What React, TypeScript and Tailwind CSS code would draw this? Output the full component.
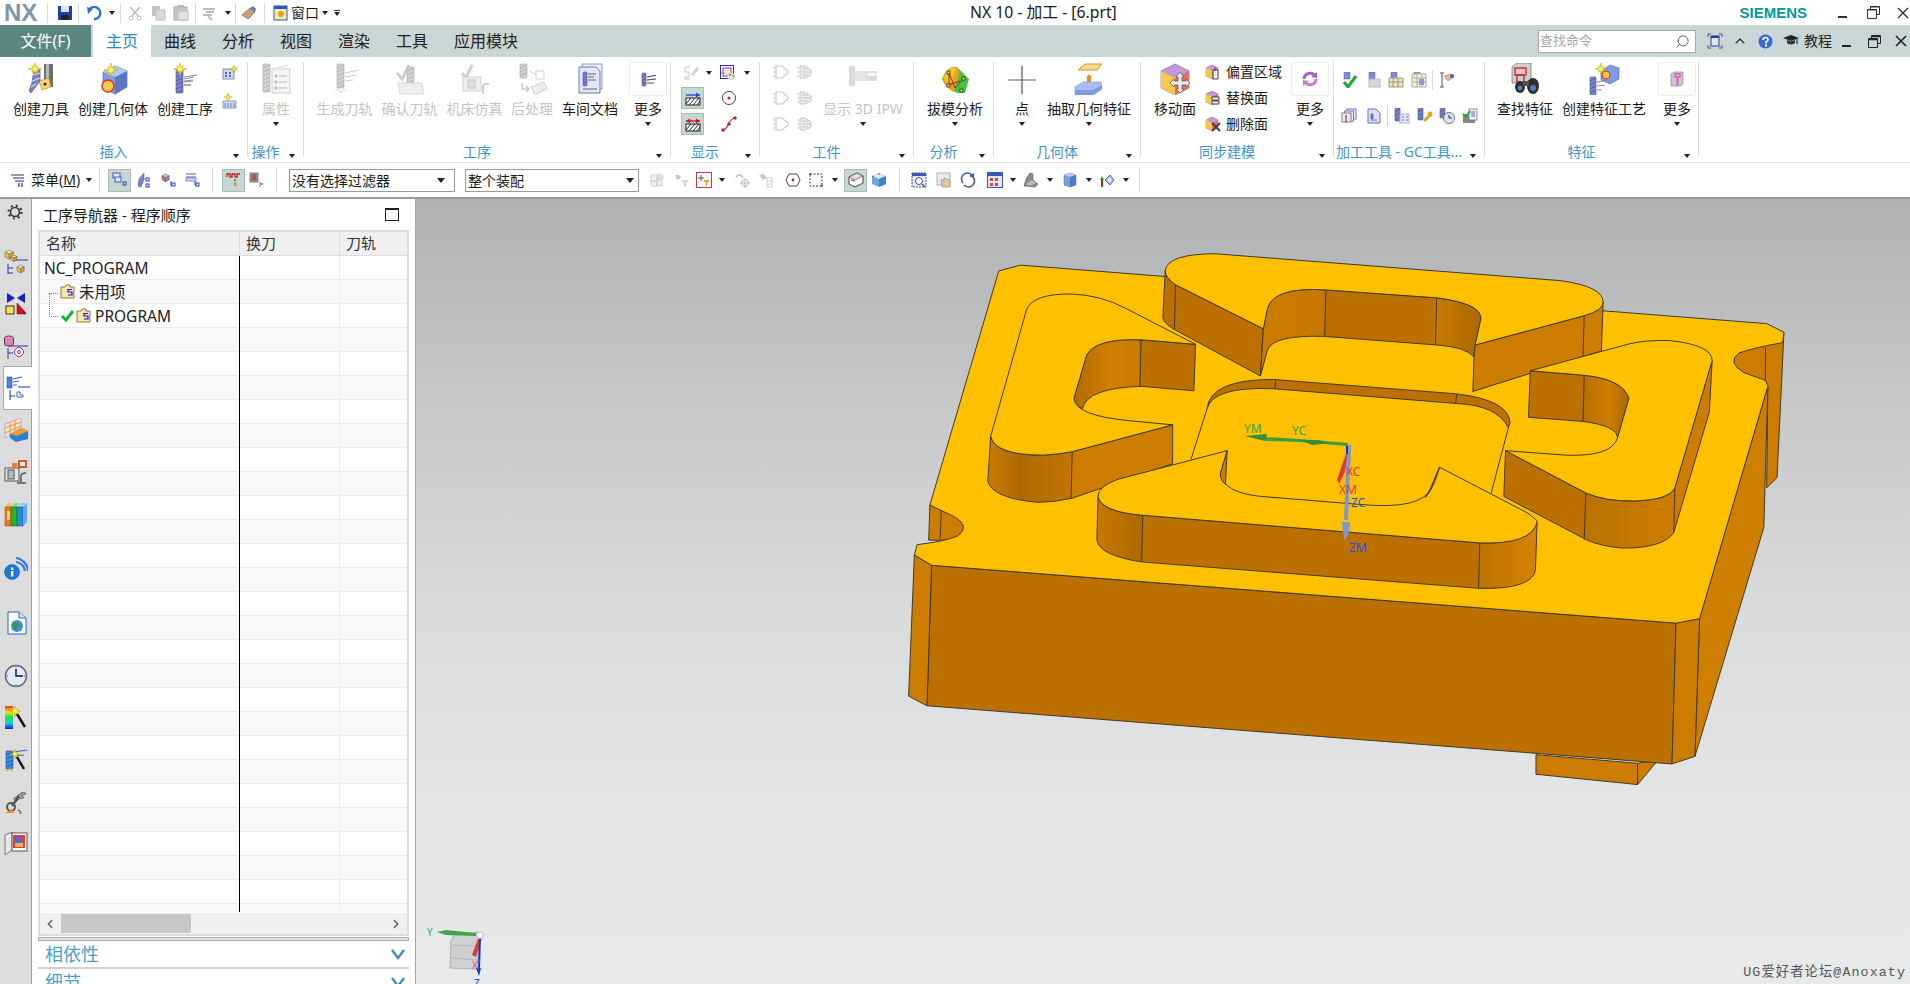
import React from 'react';
import { ChevronLeft, ChevronRight, ChevronUp, Search } from 'lucide-react';

const Tri = ({ className = '' }: { className?: string }) => (
  <span className={`block w-0 h-0 shrink-0 border-x-[3px] border-t-[4px] border-x-transparent border-t-[#222] ${className}`} />
);

const Sep = ({ className = '' }: { className?: string }) => <span className={`block w-px h-[24px] bg-[#d8d8d8] shrink-0 ${className}`} />;

const Ic = ({ s = 16, children, className = '' }: { s?: number; children: React.ReactNode; className?: string }) => (
  <svg width={s} height={s} viewBox={`0 0 ${s} ${s}`} className={`block shrink-0 ${className}`}>
    {children}
  </svg>
);

const Spark = ({ x, y, r = 7 }: { x: number; y: number; r?: number }) => {
  const pts = Array.from({ length: 16 }, (_, i) => {
    const a = (i * Math.PI) / 8;
    const d = i % 2 ? r * 0.35 : i % 4 ? r * 0.65 : r;
    return `${x + d * Math.cos(a)},${y + d * Math.sin(a)}`;
  }).join(' ');
  return <polygon points={pts} fill="#fff05a" stroke="#b8a200" strokeWidth=".5" />;
};

// spiral fluted mill, drawn as a striped bar
const Mill = ({ x, y, w = 7, h = 22, c = '#7b84c9', d = '#4a5299' }: { x: number; y: number; w?: number; h?: number; c?: string; d?: string }) => (
  <g>
    <rect x={x} y={y} width={w} height={h} fill={c} stroke={d} strokeWidth=".6" rx="1" />
    {Array.from({ length: Math.floor(h / 4) }, (_, i) => (
      <line key={i} x1={x} y1={y + 4 + i * 4} x2={x + w} y2={y + 1 + i * 4} stroke={d} strokeWidth=".8" />
    ))}
  </g>
);

const Hatch = ({ x, y, c = '#888' }: { x: number; y: number; c?: string }) => (
  <g stroke={c} strokeWidth="1">
    <line x1={x} y1={y} x2={x + 10} y2={y - 2} />
    <line x1={x} y1={y + 3} x2={x + 9} y2={y + 2} />
    <line x1={x} y1={y + 6} x2={x + 7} y2={y + 6} />
  </g>
);

const Box3 = ({ x, y, s = 10, a = '#8fb0ea', b = '#5f86d0', c = '#c4d6f6' }: { x: number; y: number; s?: number; a?: string; b?: string; c?: string }) => (
  <g stroke="#4a5a80" strokeWidth=".5">
    <polygon points={`${x},${y + s * 0.3} ${x + s * 0.6},${y} ${x + s * 1.2},${y + s * 0.3} ${x + s * 0.6},${y + s * 0.6}`} fill={c} />
    <polygon points={`${x},${y + s * 0.3} ${x + s * 0.6},${y + s * 0.6} ${x + s * 0.6},${y + s * 1.3} ${x},${y + s}`} fill={a} />
    <polygon points={`${x + s * 1.2},${y + s * 0.3} ${x + s * 0.6},${y + s * 0.6} ${x + s * 0.6},${y + s * 1.3} ${x + s * 1.2},${y + s}`} fill={b} />
  </g>
);

/* ---- large ribbon icons ---- */
const CreateTool = () => (
  <Ic s={32}>
    <rect x="19" y="1" width="9" height="23" fill="#6d6d6d" />
    <rect x="21" y="1" width="3" height="23" fill="#b9b9b9" />
    <polygon points="14,18 24,15 26,24 17,27" fill="#f7d66a" stroke="#a5801f" strokeWidth=".6" />
    <circle cx="20" cy="21" r="1.6" fill="#333" />
    <path d="M9 6 L15 6 L15 18 L6 30 L4 28 L7 20 Z" fill="#7b84c9" stroke="#4a5299" strokeWidth=".7" />
    <path d="M8 12 L15 10 M7 18 L15 15 M6 24 L11 21" stroke="#e4e6f6" strokeWidth="1" />
    <Spark x={10} y={6} r={7} />
  </Ic>
);
const CreateGeom = () => (
  <Ic s={32}>
    <polygon points="6,9 18,3 30,8 30,24 18,31 6,25" fill="#7e9ce4" stroke="#56688f" strokeWidth=".7" />
    <polygon points="18,14 30,8 30,24 18,31" fill="#5977c6" />
    <polygon points="6,9 18,3 30,8 18,14" fill="#b4c6f2" />
    <circle cx="11" cy="23" r="6" fill="#f7c84b" stroke="#e0341f" strokeWidth="1.4" />
    <Spark x={14} y={7} r={7} />
  </Ic>
);
const CreateOp = () => (
  <Ic s={32}>
    <Mill x={7} y={6} w={7} h={24} />
    <Hatch x={15} y={16} />
    <path d="M15 14 L28 12 M15 18 L24 17 M15 22 L22 22" stroke="#8d8d8d" strokeWidth="1.2" />
    <Spark x={11} y={6} r={7} />
  </Ic>
);
const GreyMill = ({ x, y, h = 22 }: { x: number; y: number; h?: number }) => <Mill x={x} y={y} w={7} h={h} c="#d2d2d2" d="#ababab" />;
const AttrIcon = () => (
  <Ic s={32}>
    <GreyMill x={3} y={1} h={28} />
    <rect x="12" y="6" width="18" height="24" fill="#f4f4f4" stroke="#cfcfcf" />
    <path d="M15 12h2v2h-2zM15 18h2v2h-2zM15 24h2v2h-2zM19 13h8M19 19h8M19 25h8" stroke="#b5b5b5" fill="none" />
    <path d="M12 6 L28 2" stroke="#d8d8d8" />
  </Ic>
);
const GenPath = () => (
  <Ic s={32}>
    <GreyMill x={8} y={1} h={24} />
    <path d="M16 10 L30 7 M16 14 L27 12 M16 18 L24 17" stroke="#cdcdcd" strokeWidth="1.2" />
    <path d="M6 28 L9 26 L12 30 L15 26 L18 28" stroke="#dcdcdc" fill="none" />
  </Ic>
);
const VerifyPath = () => (
  <Ic s={32}>
    <path d="M3 10 L8 16 L15 2" stroke="#cfcfcf" strokeWidth="3" fill="none" />
    <GreyMill x={13} y={4} h={20} />
    <polygon points="4,20 28,20 30,31 6,31" fill="#eeeeee" stroke="#d8d8d8" />
  </Ic>
);
const MachSim = () => (
  <Ic s={32}>
    <path d="M3 10 L7 15 L13 2" stroke="#d0d0d0" strokeWidth="3" fill="none" />
    <rect x="4" y="14" width="18" height="14" fill="#efefef" stroke="#cfcfcf" />
    <rect x="9" y="17" width="7" height="8" fill="#dedede" stroke="#c6c6c6" />
    <path d="M24 31 L24 24 Q24 20 30 21" stroke="#cdcdcd" strokeWidth="2" fill="none" />
  </Ic>
);
const PostProc = () => (
  <Ic s={32}>
    <GreyMill x={4} y={1} h={14} />
    <path d="M14 8 L20 12 M20 8h8v8h-8z" stroke="#cfcfcf" fill="none" />
    <path d="M6 20 L6 26 L12 26 M10 23 L13 26 L10 29" stroke="#c8c8c8" strokeWidth="1.5" fill="none" />
    <polygon points="15,24 28,19 31,26 19,31" fill="#ededed" stroke="#d0d0d0" />
  </Ic>
);
const ShopDoc = () => (
  <Ic s={32}>
    <rect x="8" y="1" width="20" height="25" fill="#eef0fa" stroke="#8f98c9" />
    <path d="M5 4 H22 L26 8 V30 H5 Z" fill="#e3e6f8" stroke="#6f78b4" />
    <Mill x={9} y={9} w={4} h={14} />
    <path d="M14 11h8M14 14h6M14 17h8M9 26h14" stroke="#555" strokeWidth=".9" />
  </Ic>
);
const MoreBox = ({ children }: { children: React.ReactNode }) => (
  <span className="flex items-center justify-center w-[38px] h-[34px] border border-[#ececec] rounded-[3px] bg-white">{children}</span>
);
const IpwIcon = () => (
  <Ic s={32}>
    <rect x="2" y="3" width="6" height="20" fill="#dadada" />
    <rect x="8" y="8" width="10" height="10" fill="#e5e5e5" />
    <polygon points="18,8 30,8 30,18 18,18" fill="#dedede" />
    <rect x="20" y="10" width="10" height="3" fill="#f3f3f3" />
  </Ic>
);
const Draft = () => (
  <Ic s={32}>
    <path d="M6 10 Q14 0 20 6 Q25 11 30 16 Q28 22 26 30 L18 30 Q6 24 3 16 Z" fill="#3ec63e" />
    <path d="M6 10 Q14 0 20 6 Q20 18 14 29 Q6 24 3 16 Z" fill="#f0a020" />
    <path d="M8 8 Q14 2 17 6 Q14 14 10 22 Q6 18 5 14 Z" fill="#e3d22c" />
    <path d="M10 10 L16 25 L25 15 M10 10 L10 22 L21 18" stroke="#a02020" fill="none" />
    <g fill="#f4d83c" stroke="#222" strokeWidth=".7">
      <rect x="8" y="8" width="3" height="3" />
      <rect x="8" y="21" width="3" height="3" />
      <rect x="23" y="14" width="3" height="3" />
      <rect x="21" y="26" width="3" height="3" />
    </g>
  </Ic>
);
const PointIcon = () => (
  <Ic s={32}>
    <path d="M16 3 V31 M2 17 H30" stroke="#555" strokeWidth="1.2" />
  </Ic>
);
const Extract = () => (
  <Ic s={32}>
    <polygon points="5,7 12,1 29,1 24,7" fill="#f9dc8a" stroke="#e3912c" />
    <polygon points="13,15 16,11 19,15 18,15 18,22 14,22 14,15" fill="#f28a1c" />
    <polygon points="2,24 10,19 28,19 29,26 20,32 2,32" fill="#a9bdf0" stroke="#7f93cc" strokeWidth=".6" />
    <polygon points="2,27 20,27 29,22 29,26 20,32 2,32" fill="#7d9ae4" />
  </Ic>
);
const MoveFace = () => (
  <Ic s={32}>
    <polygon points="16,1 30,8 30,25 16,32 2,25 2,8" fill="#c398dc" stroke="#7a5a95" strokeWidth=".6" />
    <polygon points="2,8 16,15 16,32 2,25" fill="#f6c84a" />
    <polygon points="16,15 30,8 30,25 16,32" fill="#e86c60" />
    <polygon points="21,9 25,14 23,14 23,18 27,18 27,16 31,20 27,24 27,22 23,22 23,26 25,26 21,30 17,26 19,26 19,22 15,22 15,24 11,20 15,16 15,18 19,18 19,14 17,14" fill="#e8e8e8" stroke="#555" strokeWidth=".7" />
  </Ic>
);
const SyncMore = () => (
  <Ic s={16}>
    <path d="M2 8 A6 6 0 0 1 13 5" stroke="#b25cc9" strokeWidth="3" fill="none" />
    <path d="M14 8 A6 6 0 0 1 3 11" stroke="#c87ed9" strokeWidth="3" fill="none" />
    <polygon points="15,1 15,7 9,6" fill="#b25cc9" />
    <polygon points="1,15 1,9 7,10" fill="#c87ed9" />
  </Ic>
);
const FindFeat = () => (
  <Ic s={32}>
    <polygon points="3,4 8,0 22,0 22,16 16,20 3,20" fill="#cfcfcf" stroke="#6a6a6a" strokeWidth=".7" />
    <rect x="6" y="5" width="11" height="7" fill="#e8c0c0" stroke="#c03030" strokeWidth="1.4" />
    <rect x="8" y="12" width="7" height="7" fill="none" stroke="#c03030" strokeWidth="1.4" />
    <ellipse cx="11" cy="24" rx="5" ry="6" fill="#2f2f2f" />
    <ellipse cx="24" cy="23" rx="6" ry="8" fill="#2f2f2f" />
    <circle cx="11" cy="25" r="2.4" fill="#5f78c4" />
    <circle cx="24" cy="25" r="3" fill="#5f78c4" />
    <rect x="14" y="18" width="6" height="5" fill="#555" />
  </Ic>
);
const CreateFeat = () => (
  <Ic s={32}>
    <polygon points="13,8 22,2 31,5 31,16 22,21 13,17" fill="#7e9ce4" stroke="#4f6399" strokeWidth=".6" />
    <circle cx="18" cy="12" r="4" fill="#f7c84b" stroke="#e0341f" />
    <Spark x={13} y={6} r={6} />
    <Mill x={2} y={14} w={6} h={18} />
    <path d="M9 19 L20 17 M9 23 L17 22 M9 27 L14 27" stroke="#8d8d8d" strokeWidth="1.1" />
  </Ic>
);
const FeatMore = () => (
  <Ic s={16}>
    <polygon points="2,3 5,1 14,1 14,13 11,15 2,15" fill="#cbcbcb" stroke="#777" strokeWidth=".6" />
    <rect x="6" y="3" width="5" height="3" fill="none" stroke="#e25cc8" strokeWidth="1.5" />
    <rect x="7.5" y="6" width="2" height="8" fill="#e25cc8" />
  </Ic>
);

/* ---- small icons ---- */
const SmallOp = () => (
  <Ic>
    <rect x="1" y="4" width="11" height="10" fill="#cfd7f3" stroke="#5a68b0" strokeWidth=".7" />
    <path d="M3 7h2v2H3zM7 7h2v2H7zM3 10h2v2H3zM7 10h2v2H7z" fill="#5a68b0" />
    <Spark x={12} y={4} r={4} />
  </Ic>
);
const SmallMethod = () => (
  <Ic>
    <path d="M1 8 H14 V15 H1 Z" fill="#cfe0f5" stroke="#5a78b0" strokeWidth=".7" />
    <path d="M2 11 H13 M2 13 H13" stroke="#5a78b0" strokeDasharray="2 1" />
    <Spark x={6} y={4} r={4} />
  </Ic>
);
const GreyFork = () => (
  <Ic>
    <path d="M1 2h5M1 2v5h4M5 7v5H1M1 12v2h5" stroke="#c4c4c4" fill="none" />
    <polygon points="7,9 13,2 15,4 9,11" fill="#cfcfcf" />
  </Ic>
);
const ColorSel = () => (
  <Ic>
    <rect x=".5" y=".5" width="13" height="13" fill="none" stroke="#2a2ac8" />
    <rect x="3" y="3" width="8" height="8" fill="#f3ead0" stroke="#a02ac8" />
    <circle cx="11" cy="11" r="3.5" fill="#eee" stroke="#999" strokeWidth=".5" />
    <circle cx="10" cy="10" r="1" fill="#e33" />
    <circle cx="13" cy="11" r="1" fill="#3c3" />
    <line x1="1" y1="8" x2="5" y2="8" stroke="#2c2" />
  </Ic>
);
const HatchArrow = ({ both = false }: { both?: boolean }) => (
  <Ic>
    <rect x="1" y="8" width="14" height="7" fill="#fff" stroke="#222" />
    <path d="M1 14 L6 8 M4 15 L10 8 M8 15 L14 8 M12 15 L15 11" stroke="#222" />
    <path d="M1 5 H15" stroke={both ? '#c02020' : '#1f50c8'} strokeWidth="1.4" />
    <polygon points="15,5 11,2.5 11,7.5" fill={both ? '#c02020' : '#1f50c8'} />
    {both && <polygon points="1,5 5,2.5 5,7.5" fill="#c02020" />}
  </Ic>
);
const CircleDot = () => (
  <Ic>
    <circle cx="8" cy="8" r="6.5" fill="none" stroke="#444" />
    <circle cx="8" cy="8" r="1.5" fill="#c02020" />
  </Ic>
);
const SCurve = () => (
  <Ic>
    <path d="M2 14 C8 14 7 2 14 2" stroke="#a03030" strokeWidth="1.2" fill="none" />
    <circle cx="2" cy="14" r="1.7" fill="#c02020" />
    <circle cx="8" cy="8" r="1.7" fill="#c02020" />
    <circle cx="14" cy="2" r="1.7" fill="#c02020" />
  </Ic>
);
const GreyCone = ({ v = 0 }: { v?: number }) => (
  <Ic>
    <path d="M1 3v2M1 7v2M1 11v2" stroke="#c6c6c6" />
    {v ? (
      <>
        <path d="M3 2 H8 L14 6 V11 L8 14 H3 Z" fill="#ececec" stroke="#c6c6c6" />
        <path d="M5 5h6M5 8h8M5 11h6" stroke="#c6c6c6" />
      </>
    ) : (
      <path d="M3 2 L9 2 L15 7 L15 9 L9 14 L3 14 Z" fill="#fff" stroke="#c6c6c6" strokeWidth="1.2" />
    )}
  </Ic>
);
const Ribbon8 = ({ kind }: { kind: 'offset' | 'replace' | 'delete' }) => (
  <Ic>
    <polygon points="1,4 7,1 13,4 13,12 7,15 1,12" fill="#c398dc" stroke="#7a5a95" strokeWidth=".5" />
    <polygon points="1,4 7,7 7,15 1,12" fill="#f6c84a" />
    <polygon points="7,7 13,4 13,12 7,15" fill="#e86c60" />
    {kind === 'offset' && <path d="M8 6h5v9H8z M10 3v4" fill="#f3f3f3" stroke="#444" />}
    {kind === 'replace' && <path d="M7 7h7v3H7z M7 11h7v3H7z" fill="#eee" stroke="#444" />}
    {kind === 'delete' && <path d="M7 7 L15 15 M15 7 L7 15" stroke="#444" strokeWidth="2" />}
  </Ic>
);
const Nub = ({ kind }: { kind: number }) => {
  const tops = ['#7f8ad0', '#7f8ad0', '#7f8ad0', '#a0a0c8'];
  return (
    <Ic>
      <rect x="3" y="0" width="6" height="7" fill={tops[kind % 4]} stroke="#5a64a8" strokeWidth=".5" />
      {kind === 0 && <path d="M3 10 L7 15 L15 4" stroke="#1eaa2c" strokeWidth="3" fill="none" />}
      {kind === 1 && <rect x="3" y="7" width="11" height="8" fill="#d8d8d8" stroke="#bbb" />}
      {kind === 2 && <path d="M1 6h14v9H1z M5 6v9 M10 6v9 M1 10h14" fill="#f5e3a8" stroke="#999" />}
      {kind === 3 && <path d="M1 2h14v13H1z M1 6h14 M1 10h14 M6 2v13 M11 2v13" fill="#f6f0d2" stroke="#aaa" />}
      {kind === 3 && <rect x="8" y="7" width="5" height="6" fill="#8b98de" />}
    </Ic>
  );
};
const FlagHand = () => (
  <Ic>
    <path d="M3 1v14M1 1h4M1 15h4" stroke="#555" />
    <polygon points="5,4 12,2 15,5 9,9" fill="#e4b890" stroke="#8a6a50" strokeWidth=".5" />
    <circle cx="13" cy="4" r="2" fill="#5060c0" />
  </Ic>
);
const Copies = () => (
  <Ic>
    <rect x="6" y="1" width="9" height="10" fill="#e8e4f6" stroke="#7a78c0" />
    <rect x="3.5" y="3" width="9" height="10" fill="#e8e4f6" stroke="#7a78c0" />
    <rect x="1" y="5" width="9" height="9" fill="#f6f1c8" stroke="#7a78c0" />
    <path d="M5 7v8" stroke="#a050c0" strokeWidth="1.5" />
  </Ic>
);
const DocSmall = () => (
  <Ic>
    <path d="M2 1h8l4 4v10H2z" fill="#dcdff5" stroke="#6a70b0" />
    <path d="M5 6h2v5H5z M5 12h6" fill="#6a70b0" stroke="#6a70b0" />
  </Ic>
);
const ToolGrid = () => (
  <Ic>
    <Mill x={1} y={0} w={5} h={13} />
    <rect x="6" y="6" width="9" height="9" fill="#e4e7f8" stroke="#b0b4d0" />
    <path d="M8 9h2M12 9h2M8 12h2M12 12h2" stroke="#6a70b0" />
  </Ic>
);
const ToolWrench = () => (
  <Ic>
    <Mill x={1} y={0} w={5} h={12} />
    <path d="M7 13 L13 7" stroke="#e0a820" strokeWidth="3" />
    <circle cx="13" cy="6" r="2.5" fill="#e0a820" />
  </Ic>
);
const ToolClock = () => (
  <Ic>
    <Mill x={1} y={0} w={5} h={10} />
    <circle cx="10" cy="10" r="5.5" fill="#dfe6ee" stroke="#777" />
    <path d="M10 7v3h3" stroke="#333" fill="none" />
  </Ic>
);
const ToolCheck = () => (
  <Ic>
    <rect x="1" y="6" width="12" height="9" fill="#888" />
    <rect x="7" y="1" width="8" height="11" fill="#f0f0f8" stroke="#5a64a8" strokeWidth=".7" />
    <path d="M9 4h4M9 6h4M9 8h4" stroke="#5a64a8" />
    <path d="M1 6 L4 9 L8 3" stroke="#1eaa2c" strokeWidth="2" fill="none" />
  </Ic>
);

/* ---- selection toolbar icons ---- */
const TbOrder = () => (
  <Ic>
    <rect x="1" y="1" width="7" height="5" fill="#dfe4f8" stroke="#4a58c0" />
    <rect x="3" y="5" width="6" height="5" fill="#dfe4f8" stroke="#4a58c0" />
    <rect x="11" y="10" width="3" height="3" fill="none" stroke="#2a3cc8" />
  </Ic>
);
const TbMachine = () => (
  <Ic>
    <polygon points="2,14 3,7 8,1 8,8 5,15" fill="#7b84c9" stroke="#4a5299" strokeWidth=".5" />
    <rect x="10" y="6" width="3" height="3" fill="none" stroke="#2a3cc8" />
    <rect x="10" y="12" width="3" height="3" fill="none" stroke="#2a3cc8" />
    <path d="M8 7 h2" stroke="#d0a020" />
  </Ic>
);
const TbGeom = () => (
  <Ic>
    <Box3 x={1} y={2} s={6} a="#d07060" b="#8a90c0" c="#d8c0e0" />
    <path d="M10 9v5" stroke="#2a3cc8" />
    <rect x="11" y="11" width="3" height="3" fill="none" stroke="#2a3cc8" />
  </Ic>
);
const TbMethod = () => (
  <Ic>
    <path d="M1 2h10M1 5h10" stroke="#4a58c0" />
    <rect x="1" y="6" width="10" height="3" fill="#cfe0f5" stroke="#4a58c0" strokeWidth=".6" />
    <rect x="11" y="11" width="3" height="3" fill="none" stroke="#2a3cc8" />
    <path d="M10 9v4h1" stroke="#2a3cc8" fill="none" />
  </Ic>
);
const TbPath = () => (
  <Ic>
    <path d="M1 5V2h3v3h2V2h3v3h2V2h3" stroke="#c02020" strokeWidth="1.3" fill="none" />
    <path d="M9 7v8" stroke="#2a3cc8" />
    <rect x="8" y="9" width="3" height="2" fill="#d8c040" />
    <rect x="8" y="13" width="3" height="2" fill="#d8c040" />
  </Ic>
);
const TbPathGrey = () => (
  <Ic>
    <rect x="1" y="1" width="8" height="9" fill="#b47a7a" stroke="#888" />
    <path d="M3 3h4M3 5h4M3 7h4" stroke="#7d3a3a" />
    <path d="M11 10v5" stroke="#6a6a90" />
    <rect x="12" y="11" width="2" height="2" fill="#888" />
  </Ic>
);
const TbGreyBlocks = () => (
  <Ic>
    <path d="M2 3h6v6H2z M8 7h5v7H8z M2 9h6v5H2z" fill="#efefef" stroke="#d0d0d0" />
    <circle cx="11" cy="5" r="3" fill="#e2e2e2" stroke="#d0d0d0" />
  </Ic>
);
const TbFunnelGrey = () => (
  <Ic>
    <path d="M1 3 Q6 2 7 6 L3 8 Z" fill="#c8c8c8" />
    <polygon points="7,8 15,8 12,12 12,15 10,15 10,12" fill="#d6d6d6" />
  </Ic>
);
const TbRedFilter = () => (
  <Ic>
    <rect x=".5" y=".5" width="15" height="15" fill="#fff" stroke="#c83a3a" />
    <path d="M5 3v6M2 6h6" stroke="#555" />
    <polygon points="7,8 14,8 11,11 11,14 10,14 10,11" fill="#e0a020" />
  </Ic>
);
const TbRotateGrey = () => (
  <Ic>
    <path d="M1 5 Q5 0 8 6" stroke="#bbb" strokeWidth="1.5" fill="none" />
    <circle cx="10" cy="11" r="3.5" fill="none" stroke="#bbb" />
    <path d="M10 6v10M5 11h10" stroke="#bbb" />
  </Ic>
);
const TbGreyTool = () => (
  <Ic>
    <path d="M1 3 L6 2 L9 6 L5 8 Z" fill="#c8c8c8" />
    <rect x="9" y="6" width="5" height="9" fill="none" stroke="#cfcfcf" />
    <path d="M9 9h5M9 12h5" stroke="#cfcfcf" />
  </Ic>
);
const TbHex = () => (
  <Ic>
    <polygon points="4,2 12,2 15,8 12,14 4,14 1,8" fill="#fff" stroke="#444" />
    <circle cx="8" cy="8" r="1.4" fill="#c02020" />
  </Ic>
);
const TbRect = () => (
  <Ic>
    <rect x="2" y="2" width="12" height="12" fill="none" stroke="#333" strokeDasharray="2 1.5" />
    <circle cx="2" cy="2" r="1" fill="#c02020" />
    <circle cx="14" cy="14" r="1" fill="#c02020" />
  </Ic>
);
const TbShaded = () => (
  <Ic>
    <polygon points="1,5 9,1 15,4 15,11 7,15 1,12" fill="#fff" stroke="#444" />
    <polygon points="1,5 9,1 15,4 7,8" fill="#ddd" stroke="#444" strokeWidth=".6" />
    <path d="M3 8 L7 9" stroke="#c02020" />
  </Ic>
);
const TbCube = () => (
  <Ic>
    <polygon points="1,4 8,1 15,4 15,12 8,15 1,12" fill="#6aa8e8" />
    <polygon points="1,4 8,1 15,4 8,7" fill="#d8e8f8" />
    <polygon points="8,7 15,4 15,12 8,15" fill="#3f84d0" />
    <path d="M8 1L8 3M1 4L3 5" stroke="#c04040" />
  </Ic>
);
const TbZoomWin = () => (
  <Ic>
    <rect x="1" y="1" width="14" height="14" fill="#e3e9f8" stroke="#3a58b8" strokeDasharray="2 1" />
    <rect x="1" y="1" width="14" height="3" fill="#3a58b8" />
    <circle cx="8" cy="9" r="3.5" fill="#fff" stroke="#555" />
    <path d="M11 12l3 3" stroke="#555" strokeWidth="1.4" />
  </Ic>
);
const TbPan = () => (
  <Ic>
    <rect x="1" y="1" width="13" height="12" fill="#e6eaf6" stroke="#a4aed0" />
    <path d="M6 15 L5 8 L8 8 L8 6 L10 7 L12 7 L14 9 L14 15 Z" fill="#e8c49c" stroke="#8a6a50" strokeWidth=".5" />
  </Ic>
);
const TbRotate = () => (
  <Ic>
    <path d="M3 11 A6 6 0 0 1 12 3" stroke="#3a58b8" strokeWidth="1.6" fill="none" />
    <path d="M13 5 A6 6 0 0 1 4 13" stroke="#556" strokeWidth="1.6" fill="none" />
    <polygon points="14,1 14,6 9,4" fill="#3a58b8" />
  </Ic>
);
const TbViews = () => (
  <Ic>
    <rect x=".5" y=".5" width="15" height="15" fill="#dfe6f8" stroke="#3a58b8" />
    <rect x="1" y="1" width="14" height="3" fill="#3a58b8" />
    <path d="M3 6h3v3H3zM8 6h3v3H8zM3 11h3v3H3zM8 11h3v3H8z" fill="#d84a3a" />
  </Ic>
);
const TbRender = () => (
  <Ic>
    <polygon points="1,14 3,7 7,1 10,2 10,8 15,12 12,15" fill="#8a8a8a" stroke="#444" strokeWidth=".5" />
    <polygon points="3,12 9,8 13,11 7,14" fill="#bbb" />
  </Ic>
);
const TbCubeBlue = () => (
  <Ic>
    <polygon points="2,3 8,1 14,3 14,13 8,15 2,13" fill="#7ea0d8" stroke="#4a6ca8" strokeWidth=".5" />
    <polygon points="2,3 8,1 14,3 8,5" fill="#b8cef0" />
    <polygon points="8,5 14,3 14,13 8,15" fill="#4f7cc4" />
  </Ic>
);
const TbCsys = () => (
  <Ic>
    <path d="M3 8v7" stroke="#c02020" strokeWidth="2" />
    <polygon points="1,8 5,8 3,4" fill="#2ca02c" />
    <polygon points="6,8 11,3 15,8 11,13" fill="#a8b8e0" stroke="#5a70a8" />
    <polygon points="8,8 11,5 13,8 11,11" fill="#dfe6f6" />
  </Ic>
);

/* ---- left rail icons ---- */
const TreeStem = ({ c = '#2438b0' }: { c?: string }) => <path d="M4 14 V24 M4 18 H9 M4 23 H9 M11 10 H24" stroke={c} strokeWidth="1" fill="none" />;
const RailAsm = () => (
  <Ic s={24}>
    <TreeStem />
    <Box3 x={1} y={0} s={7} a="#f3c53c" b="#dd9e1c" c="#fbe38c" />
    <Box3 x={7} y={5} s={5} a="#f3c53c" b="#dd9e1c" c="#fbe38c" />
    <Box3 x={13} y={15} s={6} a="#f3c53c" b="#dd9e1c" c="#fbe38c" />
  </Ic>
);
const RailCsys = () => (
  <Ic s={24}>
    <polygon points="3,1 11,6 3,11" fill="#1420c8" />
    <polygon points="21,1 13,6 21,11" fill="#1420c8" />
    <path d="M12 1V11" stroke="#fff" />
    <rect x="2" y="14" width="8" height="8" fill="#f3e14c" stroke="#333" />
    <polygon points="13,11 22,21 22,22 13,22" fill="#d01414" stroke="#600" strokeWidth=".5" />
  </Ic>
);
const RailGeo = () => (
  <Ic s={24}>
    <path d="M4 13 V24 M4 18 H9 M4 11 H24" stroke="#2438b0" fill="none" />
    <ellipse cx="5" cy="3" rx="4.5" ry="2" fill="#e8a0c8" stroke="#7a2a60" />
    <path d="M.5 3V9a4.5 2 0 0 0 9 0V3" fill="#d884b4" stroke="#7a2a60" />
    <circle cx="15" cy="17" r="4.5" fill="#fff" stroke="#96307a" />
    <circle cx="15" cy="17" r="1.5" fill="none" stroke="#96307a" />
  </Ic>
);
const RailOp = () => (
  <Ic s={24}>
    <path d="M4 14 V24 M4 20 H9 M12 11 H24" stroke="#1f32a8" fill="none" />
    <rect x="1" y="1" width="5" height="11" fill="#3f8ae0" stroke="#1f32a8" strokeWidth=".5" />
    <path d="M7 3 L16 1 M7 6 L13 5 M7 9 L11 9" stroke="#3a6ac0" strokeWidth="1.2" />
    <path d="M11 16h3v3h3v2h-6z" fill="#fff" stroke="#3a6ac0" />
  </Ic>
);
const RailMatrix = () => (
  <Ic s={24}>
    <polygon points="1,6 17,0 17,12 1,20" fill="#fbe7c6" stroke="#b7b0d6" />
    <path d="M1 10 L17 4 M1 15 L17 8 M6 4 V18 M11 2 V15" stroke="#e58a50" />
    <polygon points="6,16 17,10 24,13 24,21 12,24 6,20" fill="#2b7fd8" />
    <polygon points="6,16 17,10 24,13 13,18" fill="#f29a26" />
  </Ic>
);
const RailMach = () => (
  <Ic s={24}>
    <rect x="1" y="8" width="14" height="13" fill="#e6e6e6" stroke="#555" />
    <rect x="4" y="10" width="6" height="9" fill="#bbb" stroke="#555" />
    <path d="M17 22 V16 Q17 13 22 13 M13 23 H22" stroke="#555" strokeWidth="1.5" fill="none" />
    <rect x="8" y="3" width="5" height="4" fill="#f37b20" />
    <rect x="15" y="1" width="7" height="6" fill="#ffb" stroke="#d01414" strokeWidth="1.4" />
  </Ic>
);
const RailBooks = () => (
  <Ic s={24}>
    <polygon points="1,4 4,0 8,0 7,4" fill="#f5b968" />
    <rect x="1" y="4" width="6" height="19" fill="#ef7a1a" stroke="#a04d00" strokeWidth=".5" />
    <rect x="3" y="8" width="3" height="9" fill="#f8c888" />
    <polygon points="7,4 11,0 15,0 13,4" fill="#8ad88a" />
    <rect x="7" y="4" width="6" height="19" fill="#22b822" stroke="#0c6a0c" strokeWidth=".5" />
    <polygon points="13,4 17,0 23,0 19,4" fill="#9cc8f0" />
    <rect x="13" y="4" width="6" height="19" fill="#2a88e0" stroke="#105090" strokeWidth=".5" />
    <polygon points="19,4 23,0 23,19 19,23" fill="#64a8e8" />
  </Ic>
);
const RailInfo = () => (
  <Ic s={24}>
    <path d="M12 6 A10 10 0 0 1 21 15 M12 2 A14 14 0 0 1 24 15" stroke="#3478d8" strokeWidth="2.2" fill="none" />
    <circle cx="8" cy="16" r="7.5" fill="#1b78e0" stroke="#0f50a8" strokeWidth=".5" />
    <rect x="7" y="15" width="2.4" height="5.5" fill="#fff" />
    <rect x="7" y="11.5" width="2.4" height="2.4" fill="#fff" />
  </Ic>
);
const RailDoc = () => (
  <Ic s={24}>
    <path d="M4 1 H15 L22 7 V23 H4 Z" fill="#fff" stroke="#2a5ec0" />
    <path d="M15 1 V7 H22" fill="#d8e4f8" stroke="#2a5ec0" />
    <circle cx="13" cy="15" r="6" fill="#3f8ed8" />
    <path d="M9 12 Q13 10 15 13 Q14 17 11 19 Q8 16 9 12 Z" fill="#3a9a3a" />
  </Ic>
);
const RailClock = () => (
  <Ic s={24}>
    <circle cx="12" cy="12" r="10.5" fill="#dfeafa" stroke="#666" strokeWidth="1.5" />
    <path d="M12 5V12H19" stroke="#111" strokeWidth="1.4" fill="none" />
    <path d="M12 3v1M12 20v1M3 12h1M20 12h1" stroke="#335" />
  </Ic>
);
const RailRainbow = () => (
  <Ic s={24}>
    <defs>
      <linearGradient id="rainbowBar" x1="0" y1="0" x2="0" y2="1">
        <stop offset="0" stopColor="#f03020" />
        <stop offset=".25" stopColor="#f0e020" />
        <stop offset=".5" stopColor="#20e040" />
        <stop offset=".75" stopColor="#20c8e8" />
        <stop offset="1" stopColor="#1020e0" />
      </linearGradient>
    </defs>
    <rect x="1" y="0" width="8" height="23" fill="url(#rainbowBar)" />
    <path d="M13 8 L21 21" stroke="#111" strokeWidth="2.4" />
    <Spark x={11} y={5} r={6} />
  </Ic>
);
const RailToolWand = () => (
  <Ic s={24}>
    <Mill x={2} y={2} w={7} h={18} c="#3f8ae0" d="#1f50a8" />
    <path d="M10 3 L23 1 M11 7 L20 6" stroke="#3a6ac0" strokeWidth="1.2" />
    <path d="M1 21 L3 22 L6 20 L9 22" stroke="#e0c020" strokeWidth="1.2" fill="none" />
    <path d="M13 8 L20 20" stroke="#111" strokeWidth="2.4" />
    <Spark x={11} y={5} r={5} />
  </Ic>
);
const RailWrench = () => (
  <Ic s={24}>
    <path d="M9 9 L17 3 Q21 1 22 4 L18 5 L20 8 Q14 8 12 12" fill="#9a9a9a" stroke="#444" strokeWidth=".6" />
    <path d="M15 6 L8 16" stroke="#555" strokeWidth="2.4" />
    <circle cx="7" cy="17" r="4" fill="none" stroke="#555" strokeWidth="2" />
    <path d="M1 23 L8 19 L10 23 Z" fill="#f08a20" />
    <path d="M14 20 Q18 22 16 24" stroke="#666" strokeWidth="1.5" fill="none" />
  </Ic>
);
const RailDoor = () => (
  <Ic s={24}>
    <polygon points="1,3 8,0 8,18 1,23" fill="#e8e8e8" stroke="#777" />
    <rect x="8" y="1" width="15" height="18" fill="#fff" stroke="#555" />
    <rect x="9" y="3" width="12" height="13" fill="#e83a30" />
    <rect x="12" y="5" width="6" height="6" fill="#3a78d8" />
    <rect x="11" y="11" width="8" height="4" fill="#f0b060" />
  </Ic>
);

const Folder = () => (
  <Ic s={15}>
    <path d="M1 3 H5 L6 1 H10 V3 H14 V14 H1 Z" fill="#f5e7a8" stroke="#8a7a3a" />
    <path d="M12 5.5H8V8H12V11H8" stroke="#1010e0" strokeWidth="1.2" fill="none" />
  </Ic>
);
const Check = () => (
  <Ic s={13}>
    <path d="M1 7 L5 11 L12 2" stroke="#12b82c" strokeWidth="3" fill="none" />
  </Ic>
);

/* ---- ribbon pieces ---- */
const RibbonButton = ({
  label,
  icon,
  arrow,
  disabled,
  className = 'w-[65px]',
}: {
  label: string;
  icon: React.ReactNode;
  arrow?: boolean;
  disabled?: boolean;
  className?: string;
}) => (
  <div className={`flex flex-col items-center shrink-0 ${className}`}>
    <div className="h-[34px] flex items-center justify-center">{icon}</div>
    <div className={`mt-[3px] text-[14px] leading-[20px] whitespace-nowrap ${disabled ? 'text-[#c4c4c4]' : 'text-[#1a1a1a]'}`}>{label}</div>
    {arrow && <Tri className="mt-[3px]" />}
  </div>
);

const RibbonGroup = ({
  label,
  className,
  contentClass = '',
  children,
}: {
  label: string;
  className: string;
  contentClass?: string;
  children: React.ReactNode;
}) => (
  <div className={`relative flex flex-col h-[95px] border-r border-[#dcdcdc] shrink-0 ${className}`}>
    <div className={`flex flex-1 min-h-0 ${contentClass}`}>{children}</div>
    <div className="h-[20px] pr-[20px] flex items-center justify-center text-[14px] leading-[20px] text-[#3d95cc] whitespace-nowrap mb-[-5px]">{label}</div>
    <Tri className="absolute right-[8px] bottom-[-1px]" />
  </div>
);

const P = ({ d, f }: { d: string; f: string }) => <path d={d} fill={f} stroke="#3f3a2c" strokeWidth={1} vectorEffect="non-scaling-stroke" strokeLinejoin="round" />;
const L = ({ d }: { d: string }) => <path d={d} fill="none" stroke="#3f3a2c" strokeWidth={1} vectorEffect="non-scaling-stroke" />;

const TOP = '#ffc000';
const DARK = '#bc7000';
const MID = '#cc7d00';

const stop = (o: number, c: string) => <stop offset={o} stopColor={c} />;

function Model() {
  return (
    <svg x={900} y={240} width={900} height={568} viewBox="0 0 1568 1650" preserveAspectRatio="none" overflow="visible">
      <defs>
        <linearGradient id="wallArch">
          {stop(0, '#cb7c00')}
          {stop(0.28, '#c67800')}
          {stop(0.29, DARK)}
          {stop(0.78, DARK)}
          {stop(0.8, '#c87a00')}
          {stop(1, '#a96800')}
        </linearGradient>
        <linearGradient id="wallB">
          {stop(0, '#cb7c00')}
          {stop(0.18, '#ad6900')}
          {stop(0.45, '#c27600')}
          {stop(0.46, MID)}
          {stop(1, MID)}
        </linearGradient>
        <linearGradient id="wallBi">
          {stop(0, '#b06b00')}
          {stop(0.3, '#d08000')}
          {stop(0.53, '#c97b00')}
          {stop(0.54, DARK)}
          {stop(1, DARK)}
        </linearGradient>
        <linearGradient id="wallC">
          {stop(0, DARK)}
          {stop(0.39, DARK)}
          {stop(0.4, '#bb7200')}
          {stop(0.8, '#cc7d00')}
          {stop(1, '#cc7d00')}
        </linearGradient>
        <linearGradient id="wallCi">
          {stop(0, DARK)}
          {stop(0.54, DARK)}
          {stop(0.55, '#b87000')}
          {stop(0.8, '#cf7f00')}
          {stop(1, '#a86600')}
        </linearGradient>
        <linearGradient id="wallD">
          {stop(0, '#c67900')}
          {stop(0.1, '#ad6900')}
          {stop(0.105, DARK)}
          {stop(0.86, DARK)}
          {stop(0.865, '#bd7200')}
          {stop(1, '#d48300')}
        </linearGradient>
      </defs>

      {/* pedestal and rear walls */}
      <P d="M1108 1495 L1285 1520 L1285 1582 L1108 1552 Z" f={MID} />
      <P d="M1285 1520 L1320 1512 L1285 1582 Z" f={MID} />
      <P d="M1512 425 L1430 360 L1430 300 L1540 268 L1528 690 L1510 720 Z" f={MID} />
      <L d="M1508 312 L1506 716" />
      <P d="M52 770 L50 872 L120 872 L130 830 L95 790 Z" f={MID} />
      <L d="M72 785 L70 868" />

      {/* block sides */}
      <P d="M1393 1100 L1512 425 L1505 835 L1385 1500 Z" f="#cf7f00" />
      <P d="M55 945 L1352 1113 L1345 1522 L47 1353 Z" f={DARK} />
      <P d="M25 915 L55 945 L47 1353 L15 1325 Z" f={MID} />
      <P d="M1352 1113 L1393 1100 L1385 1500 L1345 1522 Z" f={MID} />

      {/* top face */}
      <P d="M172 90 L210 73 L1510 243 L1540 268 L1538 298 Q1490 312 1462 328 Q1440 355 1470 385 L1508 408 L1512 425 L1393 1100 L1352 1113 L55 945 L25 915 L30 885 Q80 875 100 860 Q125 830 90 800 L52 770 Z" f={TOP} />

      {/* centre step */}
      <P d="M535 490 Q540 405 650 405 L970 447 Q1060 465 1063 530 L1060 545 Q1040 480 970 475 L650 432 Q545 425 535 490 Z" f={DARK} />
      <L d="M655 405 L653 432 M970 447 L968 475 M535 490 L507 637 M1060 545 L1030 735" />

      {/* walls */}
      <P d="M462 90 Q462 110 480 130 L633 258 L628 395 L478 260 Q458 240 458 225 Z" f={DARK} />
      <L d="M480 130 L478 260" />
      <P d="M633 258 L640 200 Q650 135 742 145 L935 168 Q1015 185 1012 230 L1002 305 L1000 340 Q985 310 935 305 L740 280 Q650 275 640 320 L628 395 Z" f="url(#wallArch)" />
      <L d="M742 145 L740 280 M935 168 L933 305" />
      <P d="M1002 305 L1192 220 Q1225 205 1225 180 L1222 322 L998 440 L1000 340 Z" f={MID} />
      <L d="M1192 220 L1190 338" />

      <P d="M515 303 L420 290 Q340 285 325 335 L303 460 Q305 480 318 490 Q325 430 420 425 L512 438 Z" f="url(#wallBi)" />
      <L d="M420 290 L418 425" />
      <P d="M158 570 Q165 625 250 625 Q280 622 300 615 L475 537 L475 650 L300 750 Q270 762 240 762 Q160 750 153 700 Z" f="url(#wallB)" />
      <L d="M300 615 L298 750" />

      <P d="M1098 380 L1192 393 Q1260 405 1270 460 L1250 575 Q1250 540 1190 527 L1095 515 Z" f="url(#wallCi)" />
      <L d="M1192 393 L1190 527" />
      <P d="M1055 612 L1195 735 Q1230 760 1280 758 Q1340 755 1350 720 L1415 350 L1410 500 L1348 850 Q1330 895 1260 895 Q1220 890 1195 870 L1052 745 Z" f="url(#wallC)" />
      <L d="M1195 735 L1192 870 M1350 720 L1348 850" />

      <P d="M345 745 Q350 790 425 800 L1010 880 Q1100 885 1110 820 L1107 960 Q1100 1015 1010 1012 L420 935 Q345 915 343 870 Z" f="url(#wallD)" />
      <L d="M423 800 L421 935 M1010 880 L1008 1012" />

      {/* raised tops */}
      <P d="M462 90 Q465 40 550 40 L1150 118 Q1225 135 1225 180 Q1225 205 1192 220 L1002 305 L1012 230 Q1015 185 935 168 L742 145 Q650 135 640 200 L633 258 L480 130 Q462 110 462 90 Z" f={TOP} />
      <P d="M220 205 Q230 155 300 157 Q350 160 395 200 L515 303 L420 290 Q340 285 325 335 L303 460 Q305 510 400 525 L475 537 L300 615 Q280 622 250 625 Q165 625 158 570 Z" f={TOP} />
      <P d="M1098 380 L1270 302 Q1300 290 1340 292 Q1415 305 1415 350 L1350 720 Q1340 755 1280 758 Q1230 760 1195 735 L1055 612 L1160 625 Q1240 630 1250 575 L1270 460 Q1260 405 1192 393 Z" f={TOP} />
      <P d="M345 745 Q345 715 380 695 L570 612 L558 680 Q565 735 630 745 L800 768 Q910 785 925 720 L940 660 L1090 790 Q1110 810 1110 820 Q1100 885 1010 880 L425 800 Q350 790 345 745 Z" f={TOP} />
      <P d="M570 612 L558 680 Q559 700 567 710 Z" f={MID} />
      <P d="M940 660 L925 720 Q922 735 915 748 Q930 722 940 660 Z" f={MID} />
    </svg>
  );
}

function Triads() {
  return (
    <g fontFamily="'Noto Sans', sans-serif">
      {/* WCS / MCS triad on the part */}
      <polygon points="1348,443 1300,439 1245,436 1267,441 1300,442 1348,446" fill="#36a040" />
      <polygon points="1245,436 1267,434 1265,441" fill="#2f8f3a" />
      <polygon points="1300,440 1318,440 1330,443 1312,445" fill="#2f8f3a" />
      <polygon points="1349,445 1343,462 1337,480 1339,484 1345,472" fill="#e23a3a" />
      <polygon points="1347,445 1351,445 1348,520 1344,520" fill="#7d97d4" />
      <polygon points="1342,522 1350,522 1349,532 1345,541 1343,532" fill="#7d97d4" />
      <rect x="1346" y="446" width="2" height="8" fill="#1530c8" />
      <text x="1244" y="433" fontSize="12" fill="#3da048">YM</text>
      <text x="1292" y="435" fontSize="12" fill="#3da048">YC</text>
      <text x="1346" y="476" fontSize="12" fill="#e0403a">XC</text>
      <text x="1339" y="494" fontSize="12" fill="#e0403a">XM</text>
      <text x="1351" y="507" fontSize="12" fill="#1a56e0">ZC</text>
      <text x="1349" y="552" fontSize="12" fill="#1a56e0">ZM</text>

      {/* absolute triad, bottom-left */}
      <polygon points="454,935 480,932 480,935 477,969 450,968 451,940" fill="#cfd0d1" stroke="#b2b3b4" strokeWidth="1" />
      <path d="M453 945 L478 946 M451 958 L477 960" stroke="#b8b9ba" />
      <polygon points="437,932 446,930 476,933 476,936 446,935" fill="#3fa648" />
      <text x="427" y="936" fontSize="10" fill="#3fa648">Y</text>
      <polygon points="479,936 482,938 476,957 472,955" fill="#e23a3a" />
      <polygon points="479,936 481,936 480,968 478,968" fill="#1538d0" />
      <polygon points="476,968 481,968 479,976" fill="#1538d0" />
      <text x="472" y="969" fontSize="10" fill="#e0504a">X</text>
      <text x="474" y="987" fontSize="10" fill="#1a56e0">Z</text>
      <circle cx="480" cy="935" r="3.5" fill="#f4f4f4" stroke="#c0c0c0" />
    </g>
  );
}

export default function App() {
  return (
    <div className="w-[1910px] h-[984px] overflow-hidden flex flex-col bg-white text-[#1a1a1a] [font-family:'Noto_Sans','Noto_Sans_CJK_SC',sans-serif]">
      {/* Title bar */}
      <div className="relative h-[25px] flex items-center shrink-0 bg-white">
        <span className="ml-[4px] w-[40px] text-[24px] leading-[25px] font-bold text-[#7f96a8] [font-family:'Liberation_Sans',sans-serif]">NX</span>
        <Sep className="ml-[3px] !h-[20px]" />
        <Ic className="ml-[9px]">
          <rect x="1" y="1" width="14" height="14" fill="#1d3fa8" />
          <rect x="4" y="1" width="8" height="6" fill="#dfe6f6" />
          <rect x="4" y="10" width="8" height="5" fill="#222" />
        </Ic>
        <Sep className="ml-[5px] !h-[20px]" />
        <Ic className="ml-[7px]">
          <path d="M3 5 A6 6 0 1 1 8 14" stroke="#2c6fd0" strokeWidth="2.4" fill="none" />
          <polygon points="1,2 7,4 2,9" fill="#2c6fd0" />
        </Ic>
        <Tri className="ml-[7px]" />
        <Sep className="ml-[5px] !h-[20px]" />
        <Ic className="ml-[6px]">
          <path d="M13 2 L5 11 M3 2 L11 11" stroke="#bdbdbd" strokeWidth="1.5" />
          <circle cx="4" cy="13" r="2" fill="none" stroke="#bdbdbd" />
          <circle cx="12" cy="13" r="2" fill="none" stroke="#bdbdbd" />
        </Ic>
        <Ic className="ml-[8px]">
          <rect x="1" y="1" width="8" height="10" fill="#c6c6c6" />
          <rect x="5" y="5" width="9" height="10" fill="#dadada" stroke="#bdbdbd" />
        </Ic>
        <Ic className="ml-[6px]">
          <rect x="1" y="2" width="13" height="13" fill="#c6c6c6" stroke="#aaa" />
          <rect x="4" y="0" width="7" height="3" fill="#bbb" />
          <rect x="5" y="6" width="10" height="9" fill="#e2e2e2" stroke="#bbb" />
        </Ic>
        <Sep className="ml-[6px] !h-[20px]" />
        <Ic className="ml-[5px]">
          <path d="M2 4h12M5 7h8M2 10h9" stroke="#bcbcbc" strokeWidth="2" />
          <path d="M7 11 L11 15" stroke="#bcbcbc" strokeWidth="2" />
        </Ic>
        <Tri className="ml-[8px]" />
        <Sep className="ml-[4px] !h-[20px]" />
        <Ic className="ml-[5px]">
          <polygon points="1,10 9,3 14,7 7,14" fill="#c4a26c" stroke="#555" strokeWidth=".6" />
          <polygon points="9,3 12,1 15,4 14,7" fill="#5a78c8" />
        </Ic>
        <Sep className="ml-[7px] !h-[20px]" />
        <Ic className="ml-[8px]">
          <rect x="1" y="1" width="13" height="14" fill="#fbe7a8" stroke="#2a58c0" />
          <rect x="1" y="1" width="13" height="3" fill="#2a58c0" />
          <circle cx="8" cy="9" r="3" fill="#e8a020" />
        </Ic>
        <span className="ml-[2px] text-[14px] leading-[25px]">窗口</span>
        <Tri className="ml-[3px]" />
        <span className="ml-[6px] w-[6px] flex flex-col gap-[1px]">
          <span className="block h-px bg-[#333]" />
          <Tri />
        </span>

        <span className="absolute left-[970px] text-[15.75px] leading-[23px] whitespace-nowrap">NX 10 - 加工 - [6.prt]</span>

        <span className="ml-auto text-[15px] font-bold text-[#009a9a] leading-[25px] [font-family:'Liberation_Sans',sans-serif]">SIEMENS</span>
        <span className="ml-[31px] w-[9px] h-[2px] bg-[#333] mt-[9px]" />
        <Ic s={13} className="ml-[20px]">
          <path d="M3.5 3.5V.5H12.5V8.5H9.5M.5 3.5H9.5V12.5H.5Z" fill="none" stroke="#333" />
          <path d="M.5 4H9.5M3.5 1H12.5" stroke="#333" />
        </Ic>
        <Ic s={12} className="ml-[17px] mr-[1px]">
          <path d="M1 1L11 11M11 1L1 11" stroke="#333" strokeWidth="1.4" />
        </Ic>
      </div>

      {/* Tab row */}
      <div className="h-[32px] flex items-stretch shrink-0 bg-[#c8d6d5]">
        <div className="w-[91px] flex items-center justify-center bg-[#5a8780] text-white text-[16px]">文件(F)</div>
        <div className="ml-[2px] px-[13px] flex items-center bg-white text-[16px] text-[#2a8cc0] w-[58px] justify-center">主页</div>
        {['曲线', '分析', '视图', '渲染', '工具', '应用模块'].map(t => (
          <div key={t} className="px-[13px] flex items-center justify-center text-[16px] text-[#222] whitespace-nowrap min-w-[58px]">
            {t}
          </div>
        ))}
        <div className="ml-auto flex items-center pr-[3px]">
          <div className="w-[158px] h-[23px] flex items-center justify-between bg-white border border-[#a9a9a9] pl-[1px] pr-[5px]">
            <span className="text-[13px] text-[#a8a8a8]">查找命令</span>
            <Search className="w-[15px] h-[15px] -scale-x-100 text-[#555]" strokeWidth={1.5} />
          </div>
          <Ic className="ml-[11px]">
            <path d="M1 4V1H4M12 1H15V4M15 12V15H12M4 15H1V12" stroke="#555" fill="none" />
            <rect x="4" y="3" width="8" height="10" fill="#dfe6f6" stroke="#1d3fa8" />
            <rect x="4" y="3" width="8" height="2" fill="#1d3fa8" />
          </Ic>
          <ChevronUp className="ml-[9px] w-[16px] h-[16px] text-[#222]" strokeWidth={1.6} />
          <Ic s={15} className="ml-[10px]">
            <circle cx="7.5" cy="7.5" r="7" fill="#3a68d0" />
            <path d="M5 6 Q5 3.5 7.5 3.5 Q10 3.5 10 5.5 Q10 7 8 8 V9.5" stroke="#fff" strokeWidth="1.6" fill="none" />
            <rect x="7" y="10.5" width="2" height="2" fill="#fff" />
          </Ic>
          <Ic className="ml-[10px]">
            <polygon points="0,5 8,2 16,5 8,8" fill="#222" />
            <path d="M4 7 V10 Q8 13 12 10 V7 L8 8.5 Z" fill="#333" />
            <path d="M14 6 V11" stroke="#1d58c8" strokeWidth="1.5" />
          </Ic>
          <span className="ml-[5px] text-[14px] leading-[20px] text-[#222]">教程</span>
          <span className="ml-[10px] w-[9px] h-[2px] bg-[#222] mt-[9px]" />
          <Ic s={13} className="ml-[17px]">
            <path d="M3.5 3.5V.5H12.5V8.5H9.5M.5 3.5H9.5V12.5H.5Z" fill="none" stroke="#222" />
            <path d="M.5 4.5H9.5M3.5 1.5H12.5" stroke="#222" strokeWidth="1.4" />
          </Ic>
          <Ic s={12} className="ml-[14px]">
            <path d="M1 1L11 11M11 1L1 11" stroke="#222" strokeWidth="1.6" />
          </Ic>
        </div>
      </div>

      {/* Ribbon */}
      <div className="h-[105px] flex shrink-0 pt-[5px] bg-white">
        <RibbonGroup label="插入" className="w-[248px]" contentClass="pl-[5px]">
          <RibbonButton className="w-[72px]" label="创建刀具" icon={<CreateTool />} />
          <RibbonButton className="w-[72px]" label="创建几何体" icon={<CreateGeom />} />
          <RibbonButton className="w-[72px]" label="创建工序" icon={<CreateOp />} />
          <div className="ml-[1px] flex flex-col gap-[12px] pt-[3px]">
            <SmallOp />
            <SmallMethod />
          </div>
        </RibbonGroup>
        <RibbonGroup label="操作" className="w-[56px]">
          <RibbonButton className="w-[56px]" label="属性" icon={<AttrIcon />} arrow disabled />
        </RibbonGroup>
        <RibbonGroup label="工序" className="w-[367px]" contentClass="pl-[8px]">
          <RibbonButton label="生成刀轨" icon={<GenPath />} disabled />
          <RibbonButton label="确认刀轨" icon={<VerifyPath />} disabled />
          <RibbonButton label="机床仿真" icon={<MachSim />} disabled />
          <RibbonButton className="w-[50px]" label="后处理" icon={<PostProc />} disabled />
          <RibbonButton className="w-[66px]" label="车间文档" icon={<ShopDoc />} />
          <RibbonButton
            className="ml-[5px] w-[40px]"
            label="更多"
            arrow
            icon={
              <MoreBox>
                <Ic>
                  <Mill x={2} y={2} w={4} h={13} />
                  <Hatch x={7} y={6} c="#444" />
                </Ic>
              </MoreBox>
            }
          />
        </RibbonGroup>
        <RibbonGroup label="显示" className="w-[89px]" contentClass="pl-[10px]">
          <div className="flex flex-col items-start">
            <div className="flex items-center h-[20px] pl-[3px] mt-[1px]">
              <GreyFork />
              <Tri className="ml-[6px]" />
              <span className="ml-[8px]">
                <ColorSel />
              </span>
              <Tri className="ml-[8px]" />
            </div>
            <div className="flex items-center mt-[4px]">
              <span className="w-[23px] h-[22px] flex items-center justify-center bg-[#c6d6d3] border border-[#a8bcb8]">
                <HatchArrow />
              </span>
              <span className="ml-[17px]">
                <CircleDot />
              </span>
            </div>
            <div className="flex items-center mt-[4px]">
              <span className="w-[23px] h-[22px] flex items-center justify-center bg-[#c6d6d3] border border-[#a8bcb8]">
                <HatchArrow both />
              </span>
              <span className="ml-[17px]">
                <SCurve />
              </span>
            </div>
          </div>
        </RibbonGroup>
        <RibbonGroup label="工件" className="w-[154px]" contentClass="pl-[13px]">
          <div className="grid grid-cols-[16px_16px] gap-x-[8px] gap-y-[10px] pt-[2px] h-fit">
            <GreyCone />
            <GreyCone v={1} />
            <GreyCone />
            <GreyCone v={1} />
            <GreyCone />
            <GreyCone v={1} />
          </div>
          <RibbonButton className="ml-[9px] w-[82px]" label="显示 3D IPW" icon={<IpwIcon />} arrow disabled />
        </RibbonGroup>
        <RibbonGroup label="分析" className="w-[80px]">
          <RibbonButton className="ml-[3px] w-[76px]" label="拔模分析" icon={<Draft />} arrow />
        </RibbonGroup>
        <RibbonGroup label="几何体" className="w-[147px]" contentClass="pl-[8px]">
          <RibbonButton className="w-[40px]" label="点" icon={<PointIcon />} arrow />
          <RibbonButton className="ml-[5px] w-[84px]" label="抽取几何特征" icon={<Extract />} arrow />
        </RibbonGroup>
        <RibbonGroup label="同步建模" className="w-[193px]" contentClass="pl-[12px]">
          <RibbonButton className="w-[44px]" label="移动面" icon={<MoveFace />} />
          <div className="ml-[8px] flex flex-col gap-[6px] w-[78px]">
            <div className="flex items-center gap-[5px] text-[14px] leading-[20px] whitespace-nowrap">
              <Ribbon8 kind="offset" />
              偏置区域
            </div>
            <div className="flex items-center gap-[5px] text-[14px] leading-[20px] whitespace-nowrap">
              <Ribbon8 kind="replace" />
              替换面
            </div>
            <div className="flex items-center gap-[5px] text-[14px] leading-[20px] whitespace-nowrap">
              <Ribbon8 kind="delete" />
              删除面
            </div>
          </div>
          <RibbonButton
            className="ml-[7px] w-[40px]"
            label="更多"
            arrow
            icon={
              <MoreBox>
                <SyncMore />
              </MoreBox>
            }
          />
        </RibbonGroup>
        <RibbonGroup label="加工工具 - GC工具..." className="w-[151px]" contentClass="pl-[7px]">
          <div className="flex flex-col gap-[16px] pt-[8px]">
            <div className="flex items-center">
              <Nub kind={0} />
              <span className="ml-[9px]">
                <Nub kind={1} />
              </span>
              <span className="ml-[6px]">
                <Nub kind={2} />
              </span>
              <span className="ml-[7px]">
                <Nub kind={3} />
              </span>
              <Sep className="ml-[5px] !h-[20px]" />
              <span className="ml-[6px]">
                <FlagHand />
              </span>
            </div>
            <div className="flex items-center">
              <Copies />
              <span className="ml-[9px]">
                <DocSmall />
              </span>
              <Sep className="ml-[5px] !h-[20px]" />
              <span className="ml-[6px]">
                <ToolGrid />
              </span>
              <span className="ml-[7px]">
                <ToolWrench />
              </span>
              <span className="ml-[6px]">
                <ToolClock />
              </span>
              <span className="ml-[7px]">
                <ToolCheck />
              </span>
            </div>
          </div>
        </RibbonGroup>
        <RibbonGroup label="特征" className="w-[214px]" contentClass="pl-[8px]">
          <RibbonButton className="w-[64px]" label="查找特征" icon={<FindFeat />} />
          <RibbonButton className="ml-[4px] w-[86px]" label="创建特征工艺" icon={<CreateFeat />} />
          <RibbonButton
            className="ml-[11px] w-[38px]"
            label="更多"
            arrow
            icon={
              <MoreBox>
                <FeatMore />
              </MoreBox>
            }
          />
        </RibbonGroup>
      </div>

      {/* Selection toolbar */}
      <div className="h-[37px] flex items-center shrink-0 bg-white border-t border-[#dcdcdc] border-b-2 border-b-[#9b9b9b]">
        <Ic className="ml-[10px]">
          <path d="M1 3H14M3 6H14M5 9H14" stroke="#6a7aa8" strokeWidth="1.4" />
          <path d="M9 11V15M12 11V15" stroke="#555" strokeWidth="1.4" />
        </Ic>
        <span className="ml-[5px] w-[50px] text-[14px] leading-[20px] whitespace-nowrap">
          菜单(<span className="underline">M</span>)
        </span>
        <Tri className="ml-[5px]" />
        <Sep className="ml-[7px]" />
        <span className="ml-[8px] w-[23px] h-[23px] flex items-center justify-center bg-[#c6d6d3] border border-[#a8bcb8]">
          <TbOrder />
        </span>
        <span className="ml-[5px]"><TbMachine /></span>
        <span className="ml-[9px]"><TbGeom /></span>
        <span className="ml-[8px]"><TbMethod /></span>
        <Sep className="ml-[11px]" />
        <span className="ml-[9px] w-[23px] h-[23px] flex items-center justify-center bg-[#c6d6d3] border border-[#a8bcb8]">
          <TbPath />
        </span>
        <span className="ml-[4px]"><TbPathGrey /></span>
        <Sep className="ml-[11px]" />
        <div className="ml-[12px] w-[166px] h-[23px] flex items-center justify-between border border-[#9a9a9a] pl-[2px] pr-[9px] text-[14px]">
          没有选择过滤器
          <Tri className="!border-x-[4px] !border-t-[5px]" />
        </div>
        <div className="ml-[10px] w-[174px] h-[23px] flex items-center justify-between border border-[#9a9a9a] pl-[2px] pr-[4px] text-[14px]">
          整个装配
          <Tri className="!border-x-[4px] !border-t-[5px]" />
        </div>
        <span className="ml-[10px]"><TbGreyBlocks /></span>
        <span className="ml-[9px]"><TbFunnelGrey /></span>
        <span className="ml-[6px]"><TbRedFilter /></span>
        <Tri className="ml-[7px]" />
        <span className="ml-[10px]"><TbRotateGrey /></span>
        <span className="ml-[7px]"><TbGreyTool /></span>
        <span className="ml-[11px]"><TbHex /></span>
        <span className="ml-[7px]"><TbRect /></span>
        <Tri className="ml-[8px]" />
        <span className="ml-[6px] w-[23px] h-[23px] flex items-center justify-center bg-[#c6d6d3] border border-[#a8bcb8]">
          <TbShaded />
        </span>
        <span className="ml-[4px]"><TbCube /></span>
        <Sep className="ml-[12px]" />
        <span className="ml-[11px]"><TbZoomWin /></span>
        <span className="ml-[9px]"><TbPan /></span>
        <span className="ml-[8px]"><TbRotate /></span>
        <span className="ml-[11px]"><TbViews /></span>
        <Tri className="ml-[7px]" />
        <span className="ml-[7px]"><TbRender /></span>
        <Tri className="ml-[8px]" />
        <span className="ml-[9px]"><TbCubeBlue /></span>
        <Tri className="ml-[8px]" />
        <span className="ml-[7px]"><TbCsys /></span>
        <Tri className="ml-[8px]" />
        <Sep className="ml-[10px]" />
      </div>

      {/* Main area */}
      <div className="flex flex-1 min-h-0">
        {/* Resource bar */}
        <div className="w-[32px] shrink-0 flex flex-col items-center bg-[#dcdcdc] border-r border-[#a0a0a0] pt-[5px]">
          <Ic className="mr-[2px]">
            <circle cx="8" cy="8" r="4.5" fill="none" stroke="#333" strokeWidth="1.6" />
            <circle cx="8" cy="8" r="6.5" fill="none" stroke="#333" strokeWidth="2" strokeDasharray="2 3.1" />
          </Ic>
          <div className="mt-[30px]"><RailAsm /></div>
          <div className="mt-[18px]"><RailCsys /></div>
          <div className="mt-[19px]"><RailGeo /></div>
          <div className="mt-[7px] ml-[3px] mr-[-1px] w-[30px] h-[44px] shrink-0 flex items-center justify-center bg-white border border-r-0 border-[#a8a8a8]">
            <RailOp />
          </div>
          <div className="mt-[8px]"><RailMatrix /></div>
          <div className="mt-[18px]"><RailMach /></div>
          <div className="mt-[19px]"><RailBooks /></div>
          <div className="mt-[29px]"><RailInfo /></div>
          <div className="mt-[31px]"><RailDoc /></div>
          <div className="mt-[29px]"><RailClock /></div>
          <div className="mt-[18px]"><RailRainbow /></div>
          <div className="mt-[19px]"><RailToolWand /></div>
          <div className="mt-[17px]"><RailWrench /></div>
          <div className="mt-[18px]"><RailDoor /></div>
        </div>

        {/* Navigator */}
        <div className="w-[384px] shrink-0 flex flex-col bg-white border-r border-[#a6a6a6]">
          <div className="h-[31px] flex items-center justify-between pl-[11px] pr-[16px] shrink-0">
            <span className="text-[15px] leading-[20px]">工序导航器 - 程序顺序</span>
            <span className="w-[14px] h-[13px] border border-[#222] border-t-2" />
          </div>
          <div className="mx-[6px] border-2 border-[#dcdcdc] flex flex-col shrink-0">
            <div className="h-[24px] flex bg-[#f0f0f0] border-b border-[#dcdcdc] text-[15px] leading-[23px] text-[#333]">
              <div className="w-[200px] pl-[6px] border-r border-[#dcdcdc]">名称</div>
              <div className="w-[100px] pl-[6px] border-r border-[#dcdcdc]">换刀</div>
              <div className="flex-1 pl-[6px]">刀轨</div>
            </div>
            <div className="relative h-[656px] overflow-hidden">
              {Array.from({ length: 28 }, (_, i) => (
                <div key={i} className={`h-[24px] flex border-b border-[#ececec] ${i % 2 ? 'bg-[#f9f9f9]' : 'bg-white'}`}>
                  <div className="w-[200px] flex items-center text-[15.5px] leading-[20px] text-[#222] whitespace-nowrap">
                    {i === 0 && <span className="ml-[4px]">NC_PROGRAM</span>}
                    {i === 1 && (
                      <>
                        <span className="ml-[20px]"><Folder /></span>
                        <span className="ml-[4px]">未用项</span>
                      </>
                    )}
                    {i === 2 && (
                      <>
                        <span className="ml-[21px]"><Check /></span>
                        <span className="ml-[2px]"><Folder /></span>
                        <span className="ml-[4px]">PROGRAM</span>
                      </>
                    )}
                  </div>
                  <div className="w-[100px] border-r border-[#ececec]" />
                </div>
              ))}
              {/* column rule and tree connector, drawn over the rows */}
              <div className="absolute left-[199px] top-0 bottom-0 w-px bg-black" />
              <div className="absolute left-[9px] top-[37px] w-[9px] h-[24px] border-l border-b border-dotted border-[#888]" />
              <div className="absolute left-[10px] top-[37px] w-[8px] border-t border-dotted border-[#888]" />
            </div>
            <div className="h-[21px] mt-px flex items-center bg-[#f0f0f0]">
              <ChevronLeft className="w-[14px] h-[14px] ml-[3px] text-[#555]" strokeWidth={2.2} />
              <div className="ml-[4px] w-[130px] h-[19px] bg-[#c8c8c8]" />
              <ChevronRight className="ml-auto mr-[4px] w-[14px] h-[14px] text-[#555]" strokeWidth={2.2} />
            </div>
          </div>
          <div className="mx-[6px] h-[4px] mt-px bg-[#e2e2e2] border border-[#aaaaaa] shrink-0" />
          <div className="mx-[6px] h-[28px] flex items-center justify-between pl-[7px] pr-[3px] border-b-2 border-[#d0d0d0] shrink-0">
            <span className="text-[18px] leading-[26px] text-[#4a9fd0]">相依性</span>
            <Ic><path d="M2 4 L8 12 L14 4" stroke="#3d8fc0" strokeWidth="2.4" fill="none" /></Ic>
          </div>
          <div className="mx-[6px] flex justify-between pl-[7px] pr-[3px] shrink-0">
            <span className="text-[18px] leading-[26px] text-[#4a9fd0]">细节</span>
            <Ic className="mt-[7px]"><path d="M2 2 L8 10 L14 2" stroke="#3d8fc0" strokeWidth="2.4" fill="none" /></Ic>
          </div>
        </div>

        {/* Graphics window */}
        <div className="relative flex-1 min-w-0 overflow-hidden bg-[linear-gradient(180deg,#afb1b3_0%,#c8c9cb_28%,#d9dadc_52%,#e3e4e6_75%,#e8e9eb_100%)]">
          <svg className="absolute inset-0 w-full h-full" viewBox="416 199 1494 785">
            <Model />
            <Triads />
          </svg>
          <span className="absolute right-[4px] bottom-[2px] text-[13.3px] leading-[18px] tracking-[1.1px] text-[#555] whitespace-nowrap [font-family:'Liberation_Mono','Noto_Sans_CJK_SC',monospace]">UG爱好者论坛@Anoxaty</span>
        </div>
      </div>
    </div>
  );
}
